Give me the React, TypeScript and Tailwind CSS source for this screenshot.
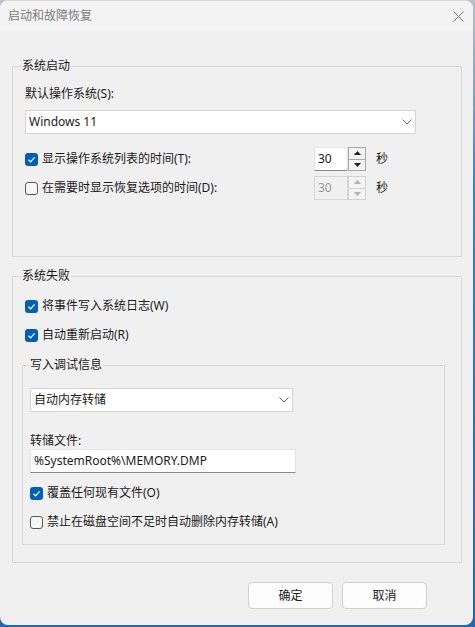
import type { ReactNode } from 'react';

const font = 'font-["Noto_Sans","Noto_Sans_CJK_SC",sans-serif]';

function Check({ checked }: { checked?: boolean }) {
  if (checked) {
    return (
      <span className="flex h-[13px] w-[13px] shrink-0 items-center justify-center rounded-[3px] bg-[#005fb8]">
        <svg width="9" height="9" viewBox="0 0 9 9" fill="none">
          <polyline points="1.5,4.8 3.6,6.8 7.6,2.4" stroke="#ffffff" strokeWidth="1.2" />
        </svg>
      </span>
    );
  }
  return <span className="h-[13px] w-[13px] shrink-0 rounded-[3px] border border-[#5a5a5a] bg-[#f6f6f6]" />;
}

function CheckRow({ checked, children, className = '' }: { checked?: boolean; children: ReactNode; className?: string }) {
  return (
    <div className={`flex h-[20px] items-center gap-[4px] ${className}`}>
      <Check checked={checked} />
      <span className="leading-[16px]">{children}</span>
    </div>
  );
}

function Chevron() {
  return (
    <svg width="10" height="6" viewBox="0 0 10 6" fill="none">
      <polyline points="0.5,0.5 5,5 9.5,0.5" stroke="#6a6a6a" strokeWidth="1" />
    </svg>
  );
}

function Combo({ value, className }: { value: string; className: string }) {
  return (
    <div className={`flex h-[24px] items-center justify-between border border-[#d4d4d4] bg-white pl-[3px] pr-[3px] ${className}`}>
      <span className="leading-[16px]">{value}</span>
      <Chevron />
    </div>
  );
}

function Arrow({ up, color }: { up?: boolean; color: string }) {
  return (
    <svg width="7" height="4" viewBox="0 0 7 4">
      <polygon points={up ? '3.5,0 7,4 0,4' : '0,0 7,0 3.5,4'} fill={color} />
    </svg>
  );
}

function Spin({ disabled }: { disabled?: boolean }) {
  const edge = disabled ? 'border-[#d2d2d2]' : 'border-[#a9a9a9]';
  const tri = disabled ? '#b0b0b0' : '#202020';
  return (
    <div className="flex h-[24px]">
      <div
        className={`flex w-[34px] items-center pl-[3px] leading-[16px] ${
          disabled
            ? 'border border-[#d6d6d6] bg-[#f0f0f0] text-[#9a9a9a]'
            : 'border border-[#e4e4e4] border-b-[#8a8a8a] bg-white'
        }`}
      >
        30
      </div>
      <div className={`flex w-[18px] flex-col border ${edge}`}>
        <div className={`flex flex-1 items-center justify-center border-b ${edge} bg-[#f4f4f4]`}>
          <Arrow up color={tri} />
        </div>
        <div className="flex flex-1 items-center justify-center bg-[#f4f4f4]">
          <Arrow color={tri} />
        </div>
      </div>
    </div>
  );
}

function Button({ children }: { children: ReactNode }) {
  return (
    <button className="flex h-[27px] w-[85px] items-center justify-center rounded-[4px] border border-[#d0d0d0] bg-[#fdfdfd] leading-[16px] text-[#1b1b1b]">
      {children}
    </button>
  );
}

export default function App() {
  return (
    <div className={`h-[627px] w-[475px] bg-[linear-gradient(180deg,#b9c2cc_0%,#3f7fc6_30%,#2a63ae_100%)] ${font} text-[12px] text-[#1a1a1a]`}>
      <div className="flex h-[625px] w-[473px] flex-col overflow-hidden rounded-[8px] border-t border-[#d8d8d8] bg-[#f0f0f0]">
        {/* title bar */}
        <div className="flex h-[30px] items-center justify-between bg-[#f3f3f3] pl-[8px] pr-[9px]">
          <span className="leading-[16px] text-[#7c7c7c]">启动和故障恢复</span>
          <svg width="11" height="11" viewBox="0 0 11 11" fill="none">
            <path d="M0.5 0.5 L10.5 10.5 M10.5 0.5 L0.5 10.5" stroke="#7a7a7a" strokeWidth="1" />
          </svg>
        </div>

        <div className="flex flex-col pl-[12px] pr-[11px] pt-[27px]">
          {/* 系统启动 */}
          <fieldset className="border border-[#d9d9d9]">
            <legend className="ml-[8px] px-px leading-[16px]">系统启动</legend>
            <div className="flex flex-col pb-[56px] pl-[12px] pt-[12px]">
              <span className="leading-[16px]">默认操作系统(S):</span>
              <Combo value="Windows 11" className="mt-[8px] w-[391px]" />
              <div className="mt-[13px] flex h-[24px] items-center">
                <div className="w-[289px]">
                  <CheckRow checked>显示操作系统列表的时间(T):</CheckRow>
                </div>
                <Spin />
                <span className="ml-[10px] leading-[16px]">秒</span>
              </div>
              <div className="mt-[5px] flex h-[24px] items-center">
                <div className="w-[289px]">
                  <CheckRow>在需要时显示恢复选项的时间(D):</CheckRow>
                </div>
                <Spin disabled />
                <span className="ml-[10px] leading-[16px]">秒</span>
              </div>
            </div>
          </fieldset>

          {/* 系统失败 */}
          <fieldset className="mt-[11px] border border-[#d9d9d9]">
            <legend className="ml-[8px] px-px leading-[16px]">系统失败</legend>
            <div className="flex flex-col pb-[17px] pl-[9px] pr-[16px] pt-[12px]">
              <CheckRow checked className="ml-[3px]">将事件写入系统日志(W)</CheckRow>
              <CheckRow checked className="ml-[3px] mt-[9px]">自动重新启动(R)</CheckRow>

              <fieldset className="mt-[12px] border border-[#d9d9d9]">
                <legend className="ml-[6px] px-px leading-[16px]">写入调试信息</legend>
                <div className="flex flex-col pb-[12px] pl-[7px] pt-[15px]">
                  <Combo value="自动内存转储" className="w-[263px]" />
                  <span className="mt-[21px] leading-[16px]">转储文件:</span>
                  <div className="flex h-[24px] w-[266px] items-center border border-[#e4e4e4] border-b-[#8a8a8a] bg-white pl-[3px] leading-[16px]">
                    %SystemRoot%\MEMORY.DMP
                  </div>
                  <CheckRow checked className="mt-[10px]">覆盖任何现有文件(O)</CheckRow>
                  <CheckRow className="mt-[9px]">禁止在磁盘空间不足时自动删除内存转储(A)</CheckRow>
                </div>
              </fieldset>
            </div>
          </fieldset>
        </div>

        <div className="mt-[19px] flex justify-end gap-[9px] pr-[46px]">
          <Button>确定</Button>
          <Button>取消</Button>
        </div>
      </div>
    </div>
  );
}
